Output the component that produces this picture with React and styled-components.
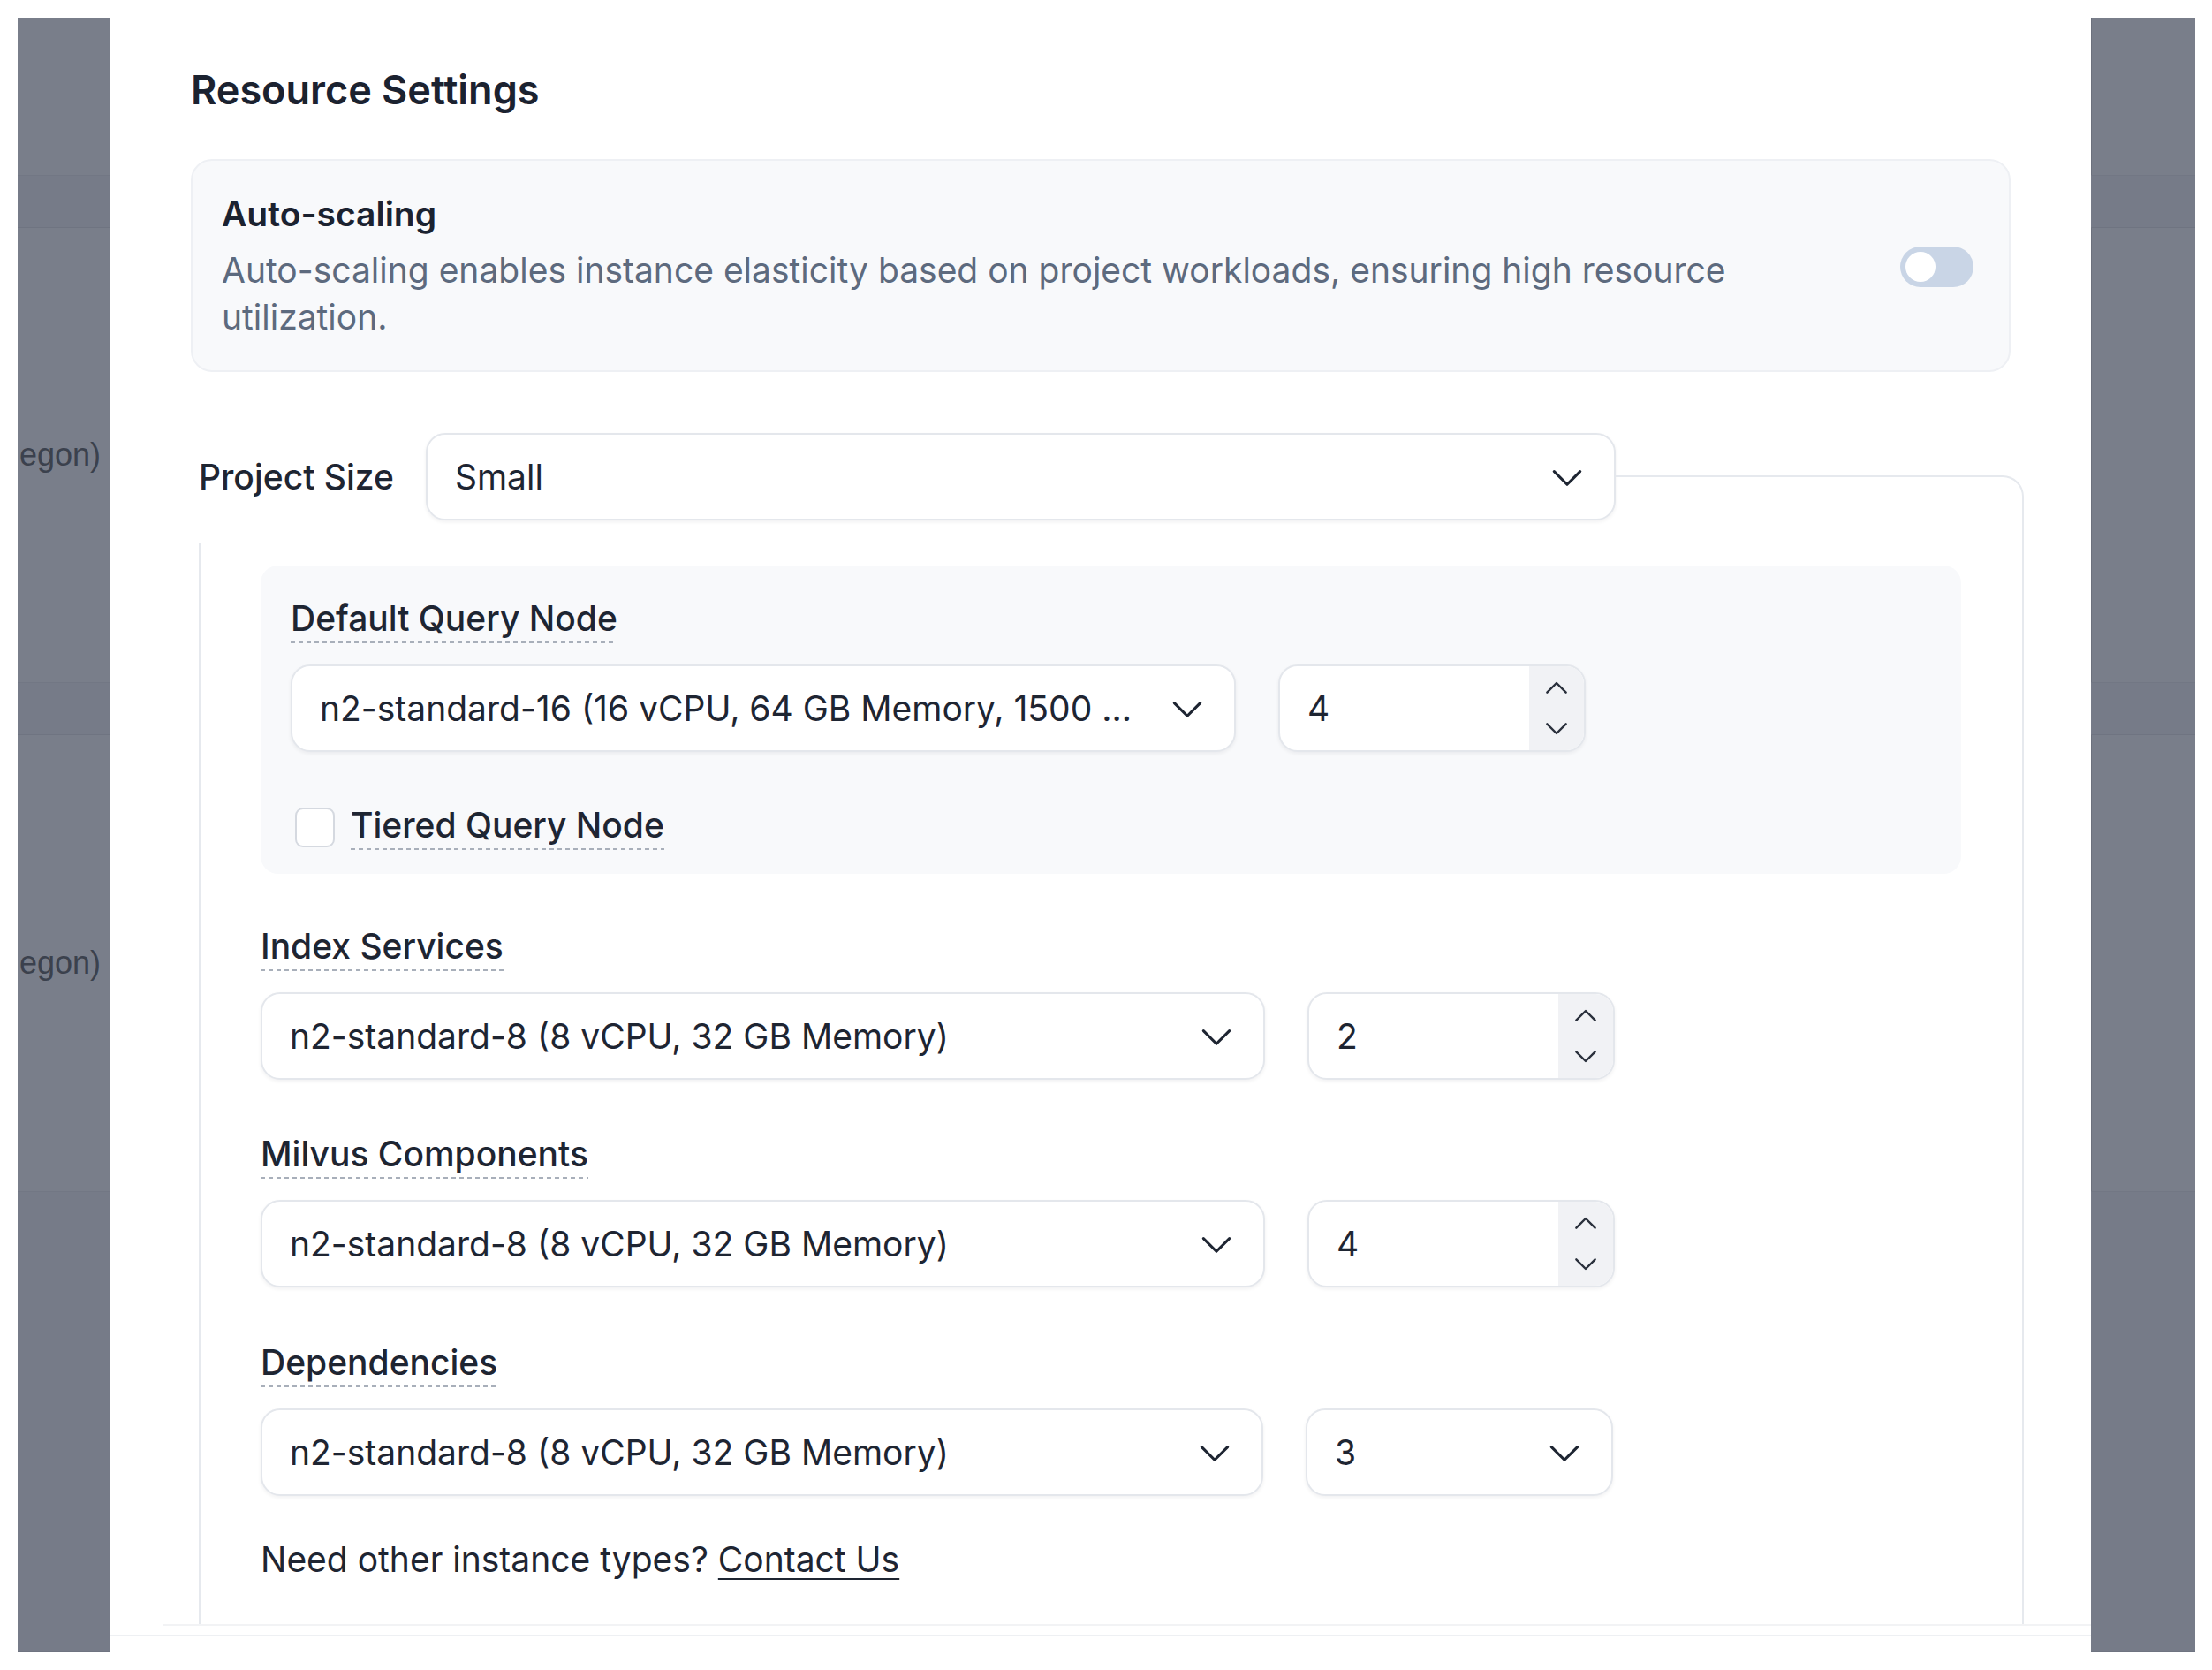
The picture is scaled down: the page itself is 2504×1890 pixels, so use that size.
import React from 'react';
import styled, {createGlobalStyle} from 'styled-components';

const GlobalStyle = createGlobalStyle`
  html, body {
    margin: 0;
    padding: 0;
    background: #ffffff;
  }
  body {
    font-family: Inter, "Noto Sans", sans-serif;
    color: #1e2532;
  }
  * {
    box-sizing: border-box;
  }
`;

const Screen = styled.div`
  width: 2504px;
  height: 1890px;
  padding: 20px 19px 20px 20px;
`;

const Backdrop = styled.div`
  display: flex;
  height: 100%;
  background: #797e8a;
  overflow: hidden;
`;

const Strip = styled.div`
  flex: ${(props) => (props.$width ? `0 0 ${props.$width}px` : '1')};
  display: flex;
  flex-direction: column;
  padding-top: 178px;
  overflow: hidden;
`;

const StripBand = styled.div`
  flex: ${(props) => (props.$grow ? '1' : '0 0 60px')};
  background: #767b88;
  border-top: 1px solid #727784;
  border-bottom: 1px solid #6f7481;
`;

const StripRow = styled.div`
  flex: 0 0 ${(props) => props.$height}px;
  display: flex;
  align-items: center;
  justify-content: flex-end;
  padding-right: 11px;
  font-family: "Liberation Sans", Arial, sans-serif;
  font-size: 36px;
  color: #3b414d;
  white-space: nowrap;
`;

const Modal = styled.div`
  flex: 0 0 2242px;
  display: flex;
  flex-direction: column;
  background: #ffffff;
  box-shadow: 1px 0 0 #6c717d, -1px 0 0 #c9ccd2;
`;

const ScrollArea = styled.div`
  flex: 0 0 1818px;
  overflow: hidden;
  padding: 56px 0 0 91px;
`;

const FadeLine = styled.div`
  flex: 0 0 2px;
  margin-left: 59px;
  background: #f2f3f5;
`;

const Footer = styled.div`
  flex: 1;
  margin-top: 10px;
  border-top: 2px solid #eef0f3;
`;

const Title = styled.h2`
  margin: 0 0 52px;
  font-size: 45px;
  line-height: 52px;
  font-weight: 600;
  color: #1b2230;
`;

const ScalingCard = styled.div`
  width: 2060px;
  display: flex;
  align-items: center;
  gap: 120px;
  padding: 37px 40px 34px 33px;
  background: #f8f9fb;
  border: 2px solid #eef0f4;
  border-radius: 24px;
`;

const CardText = styled.div`
  flex: 1;
`;

const CardHeading = styled.div`
  font-size: 39px;
  line-height: 46px;
  font-weight: 600;
  color: #1b2230;
`;

const CardDescription = styled.div`
  margin-top: 14px;
  font-size: 39px;
  line-height: 53px;
  color: #5d6a7e;
`;

const Toggle = styled.div`
  flex: 0 0 83px;
  height: 46px;
  display: flex;
  align-items: center;
  padding-left: 6px;
  border-radius: 23px;
  background: #c9d5e6;
`;

const Knob = styled.div`
  width: 34px;
  height: 34px;
  border-radius: 50%;
  background: #ffffff;
`;

const Group = styled.div`
  width: 2066px;
  margin: 69px 0 0 9px;
`;

const GroupHeader = styled.div`
  display: flex;
`;

const GroupLabel = styled.div`
  align-self: center;
  margin-right: 36px;
  font-size: 39px;
  line-height: 46px;
  font-weight: 500;
  color: #1e2532;
`;

const Rail = styled.div`
  flex: 1;
  margin-top: 48px;
  border-top: 2px solid #e6e9ee;
  border-right: 2px solid #e6e9ee;
  border-top-right-radius: 24px;
`;

const GroupBody = styled.div`
  padding-top: 26px;
  border-right: 2px solid #e6e9ee;
`;

const BodyInner = styled.div`
  height: 1400px;
  padding: 25px 69px 0 68px;
  border-left: 2px solid #e6e9ee;
`;

const Panel = styled.div`
  padding: 37px 34px 27px;
  background: #f8f9fb;
  border-radius: 20px;
`;

const Field = styled.div`
  display: flex;
  flex-direction: column;
  align-items: flex-start;
  margin-top: ${(props) => props.$gap || 0}px;
`;

const FieldLabel = styled.span`
  padding-bottom: 5px;
  font-size: 39px;
  line-height: 46px;
  font-weight: 500;
  color: #1e2532;
  background-image: repeating-linear-gradient(
    to right,
    #a8afba 0 5px,
    transparent 5px 9px
  );
  background-repeat: no-repeat;
  background-position: left bottom;
  background-size: 100% 2px;
`;

const ControlRow = styled.div`
  display: grid;
  grid-template-columns: 1fr 348px;
  gap: 48px;
  width: ${(props) => props.$width}px;
  margin-top: 24px;
`;

const SelectBox = styled.div`
  height: 99px;
  display: flex;
  align-items: center;
  justify-content: space-between;
  gap: 16px;
  width: ${(props) => (props.$width ? `${props.$width}px` : 'auto')};
  padding: 0 31px 0 31px;
  background: #ffffff;
  border: 2px solid #e4e7ec;
  border-radius: 22px;
  box-shadow: 0 2px 4px rgba(16, 24, 40, 0.06);
  font-size: 39px;
  color: #1e2532;
`;

const SelectValue = styled.span`
  white-space: nowrap;
  overflow: hidden;
`;

const NumberBox = styled.div`
  height: 99px;
  display: flex;
  overflow: hidden;
  background: #ffffff;
  border: 2px solid #e4e7ec;
  border-radius: 22px;
  box-shadow: 0 2px 4px rgba(16, 24, 40, 0.06);
  font-size: 39px;
  color: #1e2532;
`;

const NumberValue = styled.div`
  flex: 1;
  display: flex;
  align-items: center;
  padding-left: 31px;
`;

const Spinner = styled.div`
  flex: 0 0 62px;
  display: flex;
  flex-direction: column;
  align-items: center;
  justify-content: center;
  gap: 13px;
  background: #f1f2f5;
  color: #2a303c;
`;

const CheckRow = styled.div`
  display: flex;
  align-items: center;
  gap: 18px;
  margin-top: 60px;
  padding-left: 5px;
`;

const Checkbox = styled.div`
  width: 45px;
  height: 45px;
  flex: none;
  background: #ffffff;
  border: 2px solid #d5d9e0;
  border-radius: 9px;
`;

const Footnote = styled.p`
  margin: 49px 0 0;
  font-size: 39px;
  line-height: 46px;
  color: #1e2532;
`;

const Link = styled.a`
  color: inherit;
  text-decoration: underline;
  text-decoration-thickness: 2px;
  text-underline-offset: 7px;
`;

const Chevron = ({size = 44, up = false, weight = 1.7}) => (
  <svg width={size} height={size} viewBox="0 0 24 24" fill="none">
    <path
      d={up ? 'M4 15.5l8-8 8 8' : 'M4 8.5l8 8 8-8'}
      stroke="currentColor"
      strokeWidth={weight}
      strokeLinecap="round"
      strokeLinejoin="round"
    />
  </svg>
);

const Select = ({value, width}) => (
  <SelectBox $width={width}>
    <SelectValue>{value}</SelectValue>
    <Chevron />
  </SelectBox>
);

const NumberInput = ({value}) => (
  <NumberBox>
    <NumberValue>{value}</NumberValue>
    <Spinner>
      <Chevron size={32} up weight={1.8} />
      <Chevron size={32} weight={1.8} />
    </Spinner>
  </NumberBox>
);

const BackgroundStrip = ({width, text}) => (
  <Strip $width={width}>
    <StripBand />
    <StripRow $height={514}>{text}</StripRow>
    <StripBand />
    <StripRow $height={516}>{text}</StripRow>
    <StripBand $grow />
  </Strip>
);

const resourceRows = [
  {label: 'Index Services', type: 'n2-standard-8 (8 vCPU, 32 GB Memory)', count: '2', gap: 59},
  {label: 'Milvus Components', type: 'n2-standard-8 (8 vCPU, 32 GB Memory)', count: '4', gap: 61},
];

export default function App() {
  return (
    <>
      <GlobalStyle />
      <Screen>
        <Backdrop>
          <BackgroundStrip width={105} text="egon)" />
          <Modal>
            <ScrollArea>
              <Title>Resource Settings</Title>
              <ScalingCard>
                <CardText>
                  <CardHeading>Auto-scaling</CardHeading>
                  <CardDescription>
                    Auto-scaling enables instance elasticity based on project workloads, ensuring
                    high resource utilization.
                  </CardDescription>
                </CardText>
                <Toggle>
                  <Knob />
                </Toggle>
              </ScalingCard>

              <Group>
                <GroupHeader>
                  <GroupLabel>Project Size</GroupLabel>
                  <Select value="Small" width={1347} />
                  <Rail />
                </GroupHeader>
                <GroupBody>
                  <BodyInner>
                    <Panel>
                      <Field>
                        <FieldLabel>Default Query Node</FieldLabel>
                        <ControlRow $width={1466}>
                          <Select value="n2-standard-16 (16 vCPU, 64 GB Memory, 1500 ..." />
                          <NumberInput value="4" />
                        </ControlRow>
                      </Field>
                      <CheckRow>
                        <Checkbox />
                        <FieldLabel>Tiered Query Node</FieldLabel>
                      </CheckRow>
                    </Panel>

                    {resourceRows.map((row) => (
                      <Field key={row.label} $gap={row.gap}>
                        <FieldLabel>{row.label}</FieldLabel>
                        <ControlRow $width={1533}>
                          <Select value={row.type} />
                          <NumberInput value={row.count} />
                        </ControlRow>
                      </Field>
                    ))}

                    <Field $gap={62}>
                      <FieldLabel>Dependencies</FieldLabel>
                      <ControlRow $width={1531}>
                        <Select value="n2-standard-8 (8 vCPU, 32 GB Memory)" />
                        <Select value="3" />
                      </ControlRow>
                    </Field>

                    <Footnote>
                      Need other instance types? <Link href="#">Contact Us</Link>
                    </Footnote>
                  </BodyInner>
                </GroupBody>
              </Group>
            </ScrollArea>
            <FadeLine />
            <Footer />
          </Modal>
          <BackgroundStrip />
        </Backdrop>
      </Screen>
    </>
  );
}
